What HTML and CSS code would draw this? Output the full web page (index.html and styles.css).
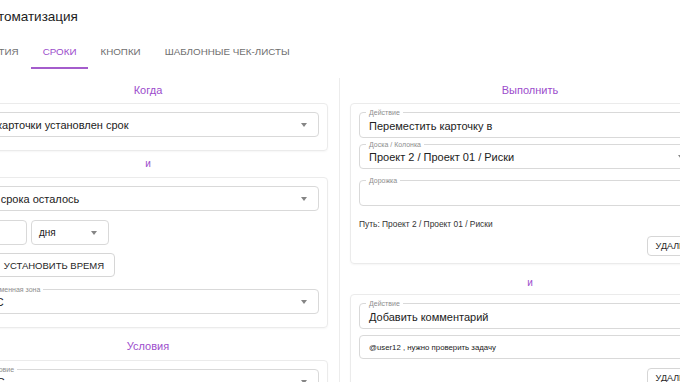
FILE: index.html
```html
<!DOCTYPE html>
<html lang="ru">
<head>
<meta charset="utf-8">
<title>Автоматизация</title>
<link rel="stylesheet" href="styles.css">
</head>
<body>
<div class="page">
  <div class="title">Автоматизация</div>
  <div class="tabs">
    <div class="tab">События</div>
    <div class="tab active">Сроки</div>
    <div class="tab">Кнопки</div>
    <div class="tab">Шаблонные чек-листы</div>
  </div>
  <div class="columns">
    <div class="col col-left">
      <div class="heading">Когда</div>
      <div class="card card-a">
        <div class="field select">
          <span class="value">У карточки установлен срок</span>
          <span class="arrow"></span>
        </div>
      </div>
      <div class="heading and">и</div>
      <div class="card card-b">
        <div class="field select shift">
          <span class="value">До срока осталось</span>
          <span class="arrow"></span>
        </div>
        <div class="row">
          <div class="field num"><span class="value">1</span></div>
          <div class="field select unit">
            <span class="value">дня</span>
            <span class="arrow"></span>
          </div>
        </div>
        <div class="btn btn-time">Установить время</div>
        <div class="field select labeled tz">
          <span class="label">Временная зона</span>
          <span class="value">UTC</span>
          <span class="arrow"></span>
        </div>
      </div>
      <div class="heading section">Условия</div>
      <div class="card card-c">
        <div class="field select labeled tz-like">
          <span class="label">Условие</span>
          <span class="value">UTC</span>
          <span class="arrow"></span>
        </div>
      </div>
    </div>
    <div class="divider"></div>
    <div class="col col-right">
      <div class="heading">Выполнить</div>
      <div class="card card-d">
        <div class="field labeled f1">
          <span class="label">Действие</span>
          <span class="value">Переместить карточку в</span>
        </div>
        <div class="field select labeled f2">
          <span class="label">Доска / Колонка</span>
          <span class="value">Проект 2 / Проект 01 / Риски</span>
          <span class="arrow arrow-far"></span>
        </div>
        <div class="field labeled f3">
          <span class="label">Дорожка</span>
          <span class="value"></span>
        </div>
        <div class="path">Путь: Проект 2 / Проект 01 / Риски</div>
        <div class="actions"><div class="btn btn-del">Удалить</div></div>
      </div>
      <div class="heading and and-right">и</div>
      <div class="card card-e">
        <div class="field labeled f1">
          <span class="label">Действие</span>
          <span class="value">Добавить комментарий</span>
        </div>
        <div class="field comment">
          <span class="value small">@user12 , нужно проверить задачу</span>
        </div>
        <div class="actions"><div class="btn btn-del">Удалить</div></div>
      </div>
    </div>
  </div>
</div>
</body>
</html>
```
FILE: styles.css
```css
html, body {
  margin: 0;
  padding: 0;
  background: #ffffff;
}
body {
  width: 680px;
  height: 382px;
  overflow: hidden;
  font-family: "Liberation Sans", Arial, sans-serif;
  color: #222;
}
.page {
  margin-left: -32px;
  width: 760px;
}
.title {
  height: 34px;
  line-height: 34px;
  font-size: 13.5px;
  padding-left: 14px;
  color: #1d1d1d;
}
.tabs {
  display: flex;
  margin-top: 2px;
  margin-left: -11px;
}
.tab {
  height: 31px;
  line-height: 31px;
  padding: 0 12px;
  font-size: 9.8px;
  text-transform: uppercase;
  color: #6f6f6f;
  border-bottom: 2px solid transparent;
}
.tab.active {
  color: #9c4dcc;
  border-bottom-color: #a45ccc;
}
.columns {
  display: flex;
  align-items: flex-start;
  margin-top: 9px;
}
.col {
  width: 360px;
  display: flex;
  flex-direction: column;
}
.divider {
  width: 1px;
  align-self: stretch;
  height: 320px;
  background: #ececec;
  margin: 0 10px 0 11px;
}
.heading {
  height: 25px;
  line-height: 25px;
  text-align: center;
  font-size: 11px;
  color: #9c4dcc;
}
.heading.and {
  height: 26px;
  line-height: 26px;
  font-size: 10px;
}
.heading.section {
  margin-top: 8px;
  height: 24px;
  line-height: 21px;
}
.heading.and-right {
  margin-top: 8px;
  height: 22px;
  line-height: 22px;
}
.card {
  border: 1px solid #ebebeb;
  border-radius: 4px;
  box-shadow: 0 1px 2px rgba(0, 0, 0, 0.04);
  padding: 8px 8px 13px;
  display: flex;
  flex-direction: column;
  align-items: flex-start;
}
.field {
  position: relative;
  box-sizing: border-box;
  width: 100%;
  height: 25px;
  border: 1px solid #d9d9d9;
  border-radius: 4px;
  display: flex;
  align-items: center;
  padding: 0 9px;
  font-size: 11px;
  color: #222;
  white-space: nowrap;
}
.field.shift {
  padding-left: 6px;
}
.field .label {
  position: absolute;
  left: 6px;
  top: -5px;
  padding: 0 3px;
  background: #fff;
  font-size: 7px;
  line-height: 9px;
  color: #8d8d8d;
}
.field.labeled .value {
  margin-top: 1px;
}
.arrow {
  position: absolute;
  right: 11px;
  top: 50%;
  margin-top: -2px;
  width: 0;
  height: 0;
  border-left: 3.5px solid transparent;
  border-right: 3.5px solid transparent;
  border-top: 4px solid #858585;
}
.arrow-far {
  right: 16px;
}
.row {
  display: flex;
  gap: 4px;
  margin-top: 9px;
}
.field.num {
  width: 50px;
}
.field.unit {
  width: 78px;
  padding-left: 7px;
  font-size: 10px;
}
.btn {
  box-sizing: border-box;
  border: 1px solid #d6d6d6;
  border-radius: 4px;
  background: #fff;
  text-transform: uppercase;
  color: #262626;
  display: flex;
  align-items: center;
  justify-content: center;
  white-space: nowrap;
}
.btn-time {
  width: 138px;
  height: 24px;
  margin-top: 8px;
  font-size: 9.5px;
  padding-left: 16px;
}
.field.tz {
  margin-top: 12px;
  height: 25px;
  padding-left: 3px;
}
.field.tz-like {
  padding-left: 4px;
  height: 26px;
  align-items: flex-start;
}
.field.tz-like .value {
  margin-top: 6px;
}
.card-c {
  padding-bottom: 20px;
}
.f1 {
  height: 26px;
}
.f2 {
  margin-top: 6px;
}
.f3 {
  margin-top: 11px;
  height: 26px;
}
.path {
  margin-top: 11px;
  height: 14px;
  line-height: 14px;
  font-size: 8.4px;
  color: #333;
}
.actions {
  width: 100%;
  display: flex;
  justify-content: flex-end;
  margin-top: 5px;
}
.btn-del {
  height: 20px;
  padding: 0 8px;
  font-size: 9px;
  margin-right: -5px;
}
.card-d {
  padding-bottom: 7px;
}
.field.comment {
  margin-top: 6px;
  height: 24px;
}
.value.small {
  font-size: 7.8px;
}
.card-e .actions {
  margin-top: 9px;
}
```
